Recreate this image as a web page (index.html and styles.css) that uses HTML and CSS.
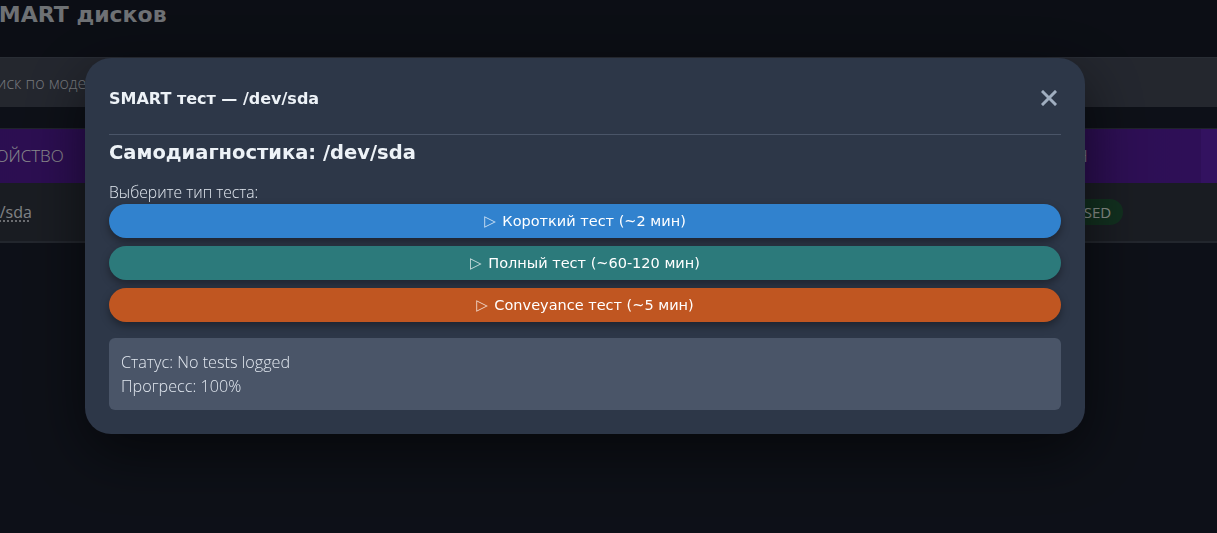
FILE: index.html
```html
<!DOCTYPE html>
<html lang="ru">
<head>
    <meta charset="UTF-8">
    <meta name="viewport" content="width=device-width, initial-scale=1.0">
    <title>SMART дисков</title>
    <link rel="stylesheet" href="styles.css">
</head>
<body>
    <div class="page">
        <h1 class="page-title">SMART дисков</h1>
        <div class="search-bar">
            <input type="text" class="search-input" placeholder="Поиск по модели, серийному номеру...">
        </div>
        <table class="disks">
            <thead>
                <tr>
                    <th class="col-device">Устройство</th>
                    <th class="col-model">Модель</th>
                    <th class="col-health">Скан</th>
                    <th class="col-extra"></th>
                </tr>
            </thead>
            <tbody>
                <tr>
                    <td class="col-device"><a class="dev-link">/dev/sda</a></td>
                    <td class="col-model">Samsung SSD 860 EVO 500GB</td>
                    <td class="col-health"><span class="badge-ok">PASSED</span></td>
                    <td class="col-extra"></td>
                </tr>
            </tbody>
        </table>
    </div>

    <div class="overlay">
        <div class="modal">
            <div class="modal-header">
                <h2 class="modal-title">SMART тест — /dev/sda</h2>
                <button class="modal-close" aria-label="Закрыть">
                    <svg width="16" height="16" viewBox="0 0 16 16">
                        <path d="M2 2 L14 14 M14 2 L2 14" stroke="currentColor" stroke-width="3" stroke-linecap="square"/>
                    </svg>
                </button>
            </div>
            <h3 class="section-title">Самодиагностика: /dev/sda</h3>
            <p class="choose-label">Выберите тип теста:</p>
            <div class="test-buttons">
                <button class="test-btn btn-short"><span class="play">▷</span> Короткий тест (~2 мин)</button>
                <button class="test-btn btn-long"><span class="play">▷</span> Полный тест (~60-120 мин)</button>
                <button class="test-btn btn-conv"><span class="play">▷</span> Conveyance тест (~5 мин)</button>
            </div>
            <div class="status-box">
                <div>Статус: No tests logged</div>
                <div>Прогресс: 100%</div>
            </div>
        </div>
    </div>
</body>
</html>
```

FILE: styles.css
```css
body {
    margin: 0;
    background: #171c28;
    color: #e2e8f0;
    font-family: "Open Sans", Arial, sans-serif;
    overflow: hidden;
}

.page {
    width: 1320px;
    margin-left: -60px;
}

.page-title {
    margin: 0;
    padding: 0 0 0 43px;
    height: 57px;
    line-height: 30px;
    font-family: "DejaVu Sans", sans-serif;
    font-size: 22px;
    font-weight: bold;
    color: #b8bcc2;
    background: #141823;
}

.search-bar {
    border-top: 1px solid #454b58;
    background: #3c414e;
    height: 49px;
    display: flex;
    align-items: center;
}

.search-input {
    width: 100%;
    border: none;
    background: transparent;
    padding: 0 36px;
    font-family: "Open Sans", sans-serif;
    font-weight: 300;
    font-size: 16px;
    color: #e2e8f0;
    outline: none;
}

.search-input::placeholder {
    color: #c4c8d0;
}

.disks {
    margin-top: 21px;
    width: 1320px;
    table-layout: fixed;
    border-collapse: collapse;
    border-top: 1px solid #353b48;
    border-bottom: 2px solid #3a404c;
}

.disks th,
.disks td {
    box-sizing: border-box;
}

.disks th {
    height: 54px;
    padding: 0 16px;
    text-align: left;
    font-weight: 300;
    font-size: 17px;
    text-transform: uppercase;
    color: #e8e8ec;
    background: linear-gradient(90deg, #481784, #4e1a92);
}

.disks th.col-extra {
    background: #561ea0;
}

.disks td {
    height: 59px;
    padding: 0 16px;
    background: #2b303a;
    font-size: 16px;
    color: #d4d8de;
    white-space: nowrap;
}

.disks td.col-device {
    padding-left: 27px;
}

.col-device { width: 320px; }
.col-model { width: 769px; }
.col-health { width: 172px; }

.dev-link {
    color: #d4d8de;
    text-decoration: underline dotted;
    text-underline-offset: 3px;
}

.badge-ok {
    display: inline-block;
    padding: 3px 12px;
    border-radius: 14px;
    background: #1e5034;
    color: #e6efe8;
    font-size: 15px;
}

.overlay {
    position: fixed;
    inset: 0;
    background: rgba(0, 0, 0, 0.4);
    display: flex;
    align-items: flex-start;
    padding: 58px 132px 0 85px;
}

.modal {
    width: 1000px;
    box-sizing: border-box;
    padding: 24px;
    background: #2d3748;
    border-radius: 26px;
    box-shadow: 0 20px 60px rgba(0, 0, 0, 0.55);
}

.modal-header {
    display: flex;
    justify-content: space-between;
    align-items: center;
    padding-bottom: 20px;
    border-bottom: 1px solid #4a5568;
}

.modal-title {
    margin: 0;
    font-family: "DejaVu Sans", sans-serif;
    font-size: 16px;
    font-weight: bold;
    color: #edf2f7;
}

.modal-close {
    width: 24px;
    height: 32px;
    padding: 0;
    border: none;
    background: none;
    color: #a0aec0;
    display: flex;
    align-items: center;
    justify-content: center;
    cursor: pointer;
}

.section-title {
    margin: 4px 0 15px;
    line-height: 28px;
    font-family: "DejaVu Sans", sans-serif;
    font-size: 19.5px;
    font-weight: bold;
    color: #edf2f7;
}

.choose-label {
    margin: 0 0 2px;
    line-height: 20px;
    font-size: 15.7px;
    font-weight: 300;
    color: #e2e8f0;
}

.test-buttons {
    display: flex;
    flex-direction: column;
    gap: 8px;
}

.test-btn {
    height: 34px;
    border: none;
    border-radius: 17px;
    color: #fff;
    font-family: "DejaVu Sans", sans-serif;
    font-size: 14.5px;
    box-shadow: 0 4px 8px rgba(0, 0, 0, 0.35);
    cursor: pointer;
}

.test-btn .play {
    font-size: 15px;
    opacity: 0.75;
    margin-right: 2px;
}

.btn-short { background: #3182ce; }
.btn-long { background: #2c7a7b; }
.btn-conv { background: #c05621; }

.status-box {
    margin-top: 16px;
    padding: 12px;
    background: #4a5568;
    border-radius: 6px;
    font-size: 16.2px;
    font-weight: 300;
    line-height: 24px;
    color: #e2e8f0;
}
```
